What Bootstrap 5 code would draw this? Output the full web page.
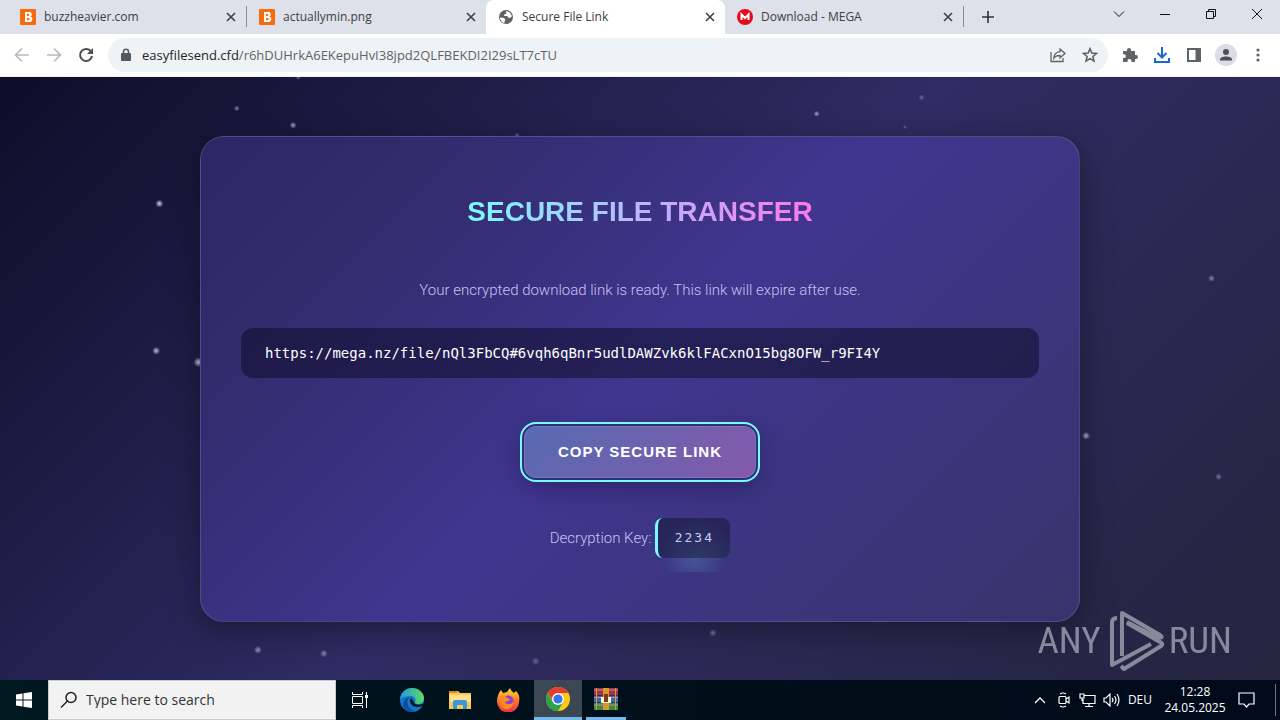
<!DOCTYPE html>
<html lang="en">
<head>
<meta charset="utf-8">
<meta name="viewport" content="width=device-width, initial-scale=1">
<title>Secure File Link</title>
<link href="https://cdn.jsdelivr.net/npm/bootstrap@5.3.0/dist/css/bootstrap.min.css" rel="stylesheet">
<style>
  body { font-family: "Open Sans", "Noto Sans", sans-serif; font-size: 12px; line-height: 16px; color: #3c4043; }
  svg { display: block; flex: none; }
  button { color: inherit; }
  .plain { border: 0; background: none; padding: 0; display: flex; align-items: center; justify-content: center; flex: none; }

  /* browser window */
  .tabstrip { height: 34px; background: #dee1e9; padding-left: 8px; }
  .tab { width: 239px; height: 34px; padding: 0 9px 0 12px; position: relative; }
  .tab.ruled { border-right: 1px solid #8a8d93; border-image: linear-gradient(transparent 20%, #8a8d93 20% 78%, transparent 78%) 1; }
  .tab.current { background: #fff; border-radius: 8px 8px 0 0; }
  .tab a { color: inherit; text-decoration: none; }
  .winbtn { width: 46px; height: 28px; color: #111; }
  .toolbar { height: 43px; background: #fff; padding: 0 6px; border-bottom: 1px solid #f3f1ea; color: #5f6368; }
  .tool { width: 32px; height: 32px; }
  .omnibox { height: 34px; border-radius: 17px; background: #f0f3f6; margin: 0 6px; padding: 0 2px 0 12px; font-size: 13px; }
  .omnibox input { border: 0; background: none; padding: 0; color: #5f6368; outline: 0; min-width: 0; }
  .lock { margin-right: 10px; }

  /* page */
  .sky { background: linear-gradient(135deg, #0f0c29, #302b63 50%, #24243e); font-family: "Liberation Sans", Arial, sans-serif; font-size: 16px; line-height: 24px; min-height: 0; }
  .stars { position: absolute; inset: 0; width: 100%; height: 100%; }
  .panel { width: 100%; max-width: 880px; padding: 57px 40px 63px; border: 1px solid rgba(255,255,255,.12); border-radius: 24px;
    background: linear-gradient(135deg, #2d2766 0%, #322b6c 18%, #40368f 50%, #3c3580 70%, #38346c 100%); box-shadow: 0 8px 32px rgba(0,0,0,.36); color: #c9c0f2; }
  .panel p, .panel .caption-text { font-family: Roboto, "Liberation Sans", sans-serif; font-weight: 300; font-size: 15px; }
  .panel p { margin: 48px 0 26px; }
  .headline { font-size: 28px; line-height: 36px; font-weight: 700; background: linear-gradient(90deg, #7afcff, #b8b8ff 50%, #ff77e9); -webkit-background-clip: text; background-clip: text; color: transparent; }
  .linkbox { height: 50px; border-radius: 12px; background: rgba(15,12,41,.55); color: #fff; padding: 0 24px; font: 14px/24px "DejaVu Sans Mono", monospace; }
  .copy { height: 52px; width: 232px; border: 1px solid rgba(255,255,255,.1); border-radius: 12px; color: #fff; font-size: 15px; font-weight: 700; letter-spacing: 1px;
    background: linear-gradient(135deg, #566bb2 0%, #6d62ae 50%, #8559ac 100%); outline: 2px solid #7afcff; outline-offset: 2px; box-shadow: 0 0 0 2px #2d3278, 0 8px 24px rgba(20,15,70,.5); }
  .key { height: 40px; width: 75px; border-left: 3px solid #7afcff; border-radius: 8px; background: radial-gradient(circle at 55% 110%, #2d3a66, #27245a 75%); color: #c5cdf5; font: 13px/40px "DejaVu Sans Mono", monospace; letter-spacing: 2px; position: relative; }
  .key::after { content: ""; position: absolute; top: 100%; left: 4px; right: 4px; height: 14px; background: radial-gradient(ellipse 32px 30px at 50% 0, rgba(76,120,175,.5), transparent); }
  .watermark { position: absolute; right: 48px; bottom: 8px; color: #a3a2b2; font: 37px/60px "Roboto Condensed", "Liberation Sans Narrow", sans-serif; opacity: .8; }

  /* taskbar */
  .taskbar { height: 40px; background: linear-gradient(90deg, #001820, #000c18 70%, #020a1c); color: #fff; }
  .task { width: 48px; height: 40px; }
  .task.running { border-bottom: 3px solid #76b9ed; }
  .task.front { background: #3b4752; margin-left: 2px; }
  .task.behind { width: 40px; }
  .search { width: 288px; height: 40px; background: #f2f2f2; border: 1px solid #c9c9d2; padding-left: 11px; color: #222; }
  .search input { border: 0; background: none; outline: 0; padding: 0; font-size: 14px; min-width: 0; }
  .search input::placeholder { color: #333; opacity: 1; }
  .tray { width: 24px; height: 40px; }
  .clock { width: 70px; }
  .tray-end { margin-left: 19px; }
</style>
</head>
<body>
<div class="vh-100 d-flex flex-column overflow-hidden">

  <header>
    <div class="tabstrip d-flex align-items-center">
      <div class="tab ruled d-flex align-items-center gap-2">
        <svg width="16" height="16"><rect width="16" height="16" rx="1" fill="#f96a0c"/><path d="M5 3h3.600a2.300 2.300 0 0 1 1.500 4.500A2.700 2.700 0 0 1 9 13H5zM7 5v2h1.300a1 1 0 0 0 0-2zM7 9v2.200h1.600a1.100 1.100 0 0 0 0-2.200z" fill="#fff" fill-rule="evenodd"/></svg>
        <a href="#" class="flex-grow-1">buzzheavier.com</a>
        <button class="plain" aria-label="Close tab"><svg width="12" height="12" stroke="currentColor" stroke-width="1.600"><path d="M2 2l8 8M10 2l-8 8"/></svg></button>
      </div>
      <div class="tab d-flex align-items-center gap-2">
        <svg width="16" height="16"><rect width="16" height="16" rx="1" fill="#f96a0c"/><path d="M5 3h3.600a2.300 2.300 0 0 1 1.500 4.500A2.700 2.700 0 0 1 9 13H5zM7 5v2h1.300a1 1 0 0 0 0-2zM7 9v2.200h1.600a1.100 1.100 0 0 0 0-2.200z" fill="#fff" fill-rule="evenodd"/></svg>
        <a href="#" class="flex-grow-1">actuallymin.png</a>
        <button class="plain" aria-label="Close tab"><svg width="12" height="12" stroke="currentColor" stroke-width="1.600"><path d="M2 2l8 8M10 2l-8 8"/></svg></button>
      </div>
      <div class="tab current d-flex align-items-center gap-2">
        <svg width="16" height="16"><circle cx="8" cy="8" r="7" fill="#5f6368"/><path d="M2 8.500l4 .5 1.500 2-1 1v2.200C4 13.700 2 11.500 2 8.500zM8 2.200c3 0 5.500 2.300 5.800 5.300L12 9l-2-.5L9.500 7H6.300V5.300l2-.6z" fill="#fff"/></svg>
        <a href="#" class="flex-grow-1">Secure File Link</a>
        <button class="plain" aria-label="Close tab"><svg width="12" height="12" stroke="currentColor" stroke-width="1.600"><path d="M2 2l8 8M10 2l-8 8"/></svg></button>
      </div>
      <div class="tab ruled d-flex align-items-center gap-2">
        <svg width="16" height="16"><circle cx="8" cy="8" r="8" fill="#e5091c"/><path d="M4.500 11V5.500L8 9l3.500-3.500V11" fill="none" stroke="#fff" stroke-width="2"/></svg>
        <a href="#" class="flex-grow-1">Download - MEGA</a>
        <button class="plain" aria-label="Close tab"><svg width="12" height="12" stroke="currentColor" stroke-width="1.600"><path d="M2 2l8 8M10 2l-8 8"/></svg></button>
      </div>
      <button class="plain tool ms-2" aria-label="New tab"><svg width="14" height="14" stroke="#333" stroke-width="1.600"><path d="M7 1v12M1 7h12"/></svg></button>
      <div class="d-flex ms-auto align-self-start">
        <button class="plain winbtn" aria-label="Search tabs"><svg width="12" height="12" fill="none" stroke="currentColor"><path d="M1 3.500l5 5 5-5"/></svg></button>
        <button class="plain winbtn" aria-label="Minimize"><svg width="10" height="10" fill="none" stroke="currentColor"><path d="M0 5.500h10"/></svg></button>
        <button class="plain winbtn" aria-label="Restore"><svg width="10" height="10" fill="none" stroke="currentColor"><path d="M.5 2.500h7v7h-7zM2.500 2.500v-2h7v7h-2"/></svg></button>
        <button class="plain winbtn" aria-label="Close"><svg width="12" height="12" fill="none" stroke="currentColor"><path d="M1 1l10 10M11 1L1 11"/></svg></button>
      </div>
    </div>

    <nav class="toolbar d-flex align-items-center" aria-label="Browser toolbar">
      <button class="plain tool" aria-label="Back"><svg width="16" height="16" fill="none" stroke="#b7b9bc" stroke-width="1.600"><path d="M15 8H2M8 1.500L1.500 8 8 14.500"/></svg></button>
      <button class="plain tool" aria-label="Forward"><svg width="16" height="16" fill="none" stroke="#b7b9bc" stroke-width="1.600"><path d="M1 8h13M8 1.500L14.500 8 8 14.500"/></svg></button>
      <button class="plain tool" aria-label="Reload"><svg width="16" height="16" fill="none" stroke="#4a4d51" stroke-width="2"><path d="M13 4.500A6 6 0 1 0 14 9"/><path d="M15 1v6H9z" fill="#4a4d51" stroke="none"/></svg></button>
      <div class="omnibox d-flex align-items-center flex-grow-1">
        <svg class="lock" width="12" height="14"><rect x="1" y="5" width="10" height="8" rx="1" fill="#55595e"/><path d="M3.500 6V3.800a2.500 2.500 0 0 1 5 0V6" fill="none" stroke="#55595e" stroke-width="1.500"/></svg>
        <label for="address" class="text-dark">easyfilesend.cfd</label><input id="address" class="flex-grow-1" value="/r6hDUHrkA6EKepuHvI38jpd2QLFBEKDI2I29sLT7cTU">
        <button class="plain tool" aria-label="Share"><svg width="16" height="16" fill="none" stroke="currentColor" stroke-width="1.300"><path d="M1 5v9.500h12V11"/><path d="M10 2l5 4.500-5 4.300V8.500c-3 0-5 .8-6.200 2.700C4 7.500 6.500 5 10 4.600z"/></svg></button>
        <button class="plain tool" aria-label="Bookmark"><svg width="16" height="16" fill="none" stroke="currentColor" stroke-width="1.600"><path d="M8 1.800l1.800 4.300 4.600.4-3.500 3 1.100 4.600-4-2.500-4 2.500 1.100-4.600-3.500-3 4.600-.4z"/></svg></button>
      </div>
      <button class="plain tool" aria-label="Extensions"><svg width="16" height="16"><path d="M1 4h4V3a2 2 0 0 1 4 0v1h4v4h1a2 2 0 0 1 0 4h-1v3H9.500v-1a2 2 0 0 0-4 0v1H1v-4h1a1.800 1.800 0 0 0 0-3.700H1z" fill="currentColor"/></svg></button>
      <button class="plain tool" aria-label="Downloads"><svg width="18" height="18" fill="none" stroke="#1a66d2" stroke-width="2"><path d="M9 1v10M4.500 7L9 11.500 13.500 7M2 12v4h14v-4"/></svg></button>
      <button class="plain tool" aria-label="Side panel"><svg width="14" height="14"><path d="M1 1h12v12H1z" fill="none" stroke="currentColor" stroke-width="2"/><path d="M8.500 1H14v12H8.500z" fill="currentColor"/></svg></button>
      <button class="plain tool" aria-label="Profile"><svg width="22" height="22"><circle cx="11" cy="11" r="11" fill="#dadde6"/><circle cx="11" cy="8" r="3" fill="#4a4f5c"/><path d="M5 16.500v-1c0-2 3-3 6-3s6 1 6 3v1z" fill="#4a4f5c"/></svg></button>
      <button class="plain tool" aria-label="Menu"><svg width="4" height="16" fill="currentColor"><circle cx="2" cy="3" r="1.600"/><circle cx="2" cy="8" r="1.600"/><circle cx="2" cy="13" r="1.600"/></svg></button>
    </nav>
  </header>

  <main class="sky flex-grow-1 position-relative d-flex align-items-center justify-content-center">
    <svg class="stars" aria-hidden="true">
      <defs><radialGradient id="glow"><stop offset="0" stop-color="#cfcbe8"/><stop offset=".4" stop-color="#a5a1cc" stop-opacity=".8"/><stop offset="1" stop-color="#a5a1cc" stop-opacity="0"/></radialGradient></defs>
      <g fill="url(#glow)">
        <circle cx="18.500%" cy="5.200%" r="3" opacity=".6"/><circle cx="22.900%" cy="8%" r="3.500" opacity=".8"/><circle cx="12.450%" cy="21%" r="4"/><circle cx="12.200%" cy="45.400%" r="4" opacity=".9"/>
        <circle cx="15.500%" cy="47.300%" r="5"/><circle cx="20.150%" cy="95%" r="4" opacity=".7"/><circle cx="25.300%" cy="95.600%" r="4" opacity=".6"/><circle cx="41.850%" cy="96.900%" r="4" opacity=".4"/>
        <circle cx="55.700%" cy="92.200%" r="4" opacity=".5"/><circle cx="63.800%" cy="6.100%" r="3" opacity=".8"/><circle cx="72%" cy="3.400%" r="3" opacity=".4"/><circle cx="70.700%" cy="8.300%" r="2" opacity=".4"/>
        <circle cx="84.850%" cy="59.500%" r="4" opacity=".9"/><circle cx="94.650%" cy="33.400%" r="3.500" opacity=".6"/><circle cx="95.200%" cy="66.300%" r="3.500" opacity=".5"/><circle cx="23.300%" cy="0" r="3" opacity=".5"/><circle cx="40.400%" cy="9.700%" r="3" opacity=".4"/>
      </g>
    </svg>

    <section class="panel position-relative text-center d-flex flex-column align-items-center">
      <h1 class="headline m-0">SECURE FILE TRANSFER</h1>
      <p>Your encrypted download link is ready. This link will expire after use.</p>
      <div class="linkbox w-100 d-flex align-items-center">https://mega.nz/file/nQl3FbCQ#6vqh6qBnr5udlDAWZvk6klFACxnO15bg8OFW_r9FI4Y</div>
      <button class="copy mt-5">COPY SECURE LINK</button>
      <div class="d-flex align-items-center gap-1 mt-4 pt-3"><span class="caption-text">Decryption Key:</span><span class="key">2234</span></div>
    </section>

    <div class="watermark d-flex align-items-center gap-1">
      <span class="me-1">ANY</span>
      <svg width="56" height="62" fill="none" stroke="currentColor" stroke-width="4" stroke-linejoin="round"><path d="M8 8Q3 8 3 13V55L42 34"/><path d="M13 46V3L51 25Q55 28 49 28L18 12"/><path d="M12 56L15 59 52 36Q55 34 51 32L18 13M13 47"/></svg>
      <span>RUN</span>
    </div>
  </main>

  <footer class="taskbar d-flex align-items-center">
    <button class="plain task" aria-label="Start"><svg width="16" height="16" fill="#fff"><path d="M0 2.500l6.500-1v6H0zM7.500 1.300L16 0v7.500H7.500zM0 8.500h6.500v6l-6.500-1zM7.500 8.500H16V16l-8.500-1.300z"/></svg></button>
    <div class="search d-flex align-items-center gap-2">
      <svg width="18" height="18" fill="none" stroke="#222" stroke-width="1.500"><circle cx="11" cy="6.500" r="5"/><path d="M7.500 10L1 16.500"/></svg>
      <input class="flex-grow-1" placeholder="Type here to search" aria-label="Search">
    </div>
    <button class="plain task" aria-label="Task view"><svg width="18" height="18" fill="none" stroke="#fff"><path d="M1.500 5.500h10v7h-10zM1.500 1v2.500h10V1M1.500 17v-2.500h10V17M15.500 1v16"/><path d="M14 4h3v3h-3z" fill="#fff" stroke="none"/></svg></button>
    <button class="plain task ms-1" aria-label="Edge"><svg width="24" height="24"><defs><linearGradient id="eg"><stop stop-color="#1b9de2"/><stop offset="1" stop-color="#62d85c"/></linearGradient></defs><circle cx="12" cy="12" r="12" fill="#1477cf"/><path d="M0 11C1 4 6 0 12 0c7 0 12 5 12 10 0 4-3 6-6 6-2 0-4-1-3-2 2-3-1-6-4-6C6 8 2 9 0 11z" fill="url(#eg)"/><path d="M8 12c-2 5 2 10 7 11-5 2-11-1-12-6 0-4 2-7 6-8z" fill="#0d4f9c"/><path d="M11 10c-3 4 1 9 6 9 3 0 5-1 6-1l1-3c-2 2-9 3-10-1z" fill="#001820"/></svg></button>
    <button class="plain task" aria-label="File Explorer"><svg width="22" height="20"><path d="M0 1h9l2 2h11v16H0z" fill="#f8ca52"/><path d="M0 1h8l1 2H0z" fill="#d98f16"/><path d="M1 5h21v7H1z" fill="#fde08a"/><path d="M4 19v-7q0-2 2-2h10q2 0 2 2v7h-4v-4H8v4z" fill="#3a97d8"/></svg></button>
    <button class="plain task" aria-label="Firefox"><svg width="24" height="24"><defs><linearGradient id="fx" x2="0" y2="1"><stop stop-color="#ffdf35"/><stop offset=".5" stop-color="#ff7b25"/><stop offset="1" stop-color="#f0264f"/></linearGradient></defs><path d="M3 5l2-3 2 3 4-1 3-4c1 3 3 4 4 5l2-2c3 3 4 6 3 11a11 11 0 0 1-22-1c0-3 1-6 2-8z" fill="url(#fx)"/><circle cx="12" cy="13" r="5.500" fill="#8a3fd6"/><path d="M5 8c3-1 5 0 6 2l3 1c-1 3-4 2-5 3 1 3 6 3 8 0 1 5-4 8-8 7-5-1-6-7-4-13z" fill="#ff8a22"/></svg></button>
    <button class="plain task running front" aria-label="Chrome"><svg width="24" height="24" viewBox="-12 -12 24 24"><circle r="12" fill="#fbc916"/><path d="M-10.400-6A12 12 0 0 1 10.400-6H0L-5 2z" fill="#e33b2e"/><path d="M-10.400-6A12 12 0 0 0 0 12L5.200 3H-5.200z" fill="#2ba24c"/><circle r="6" fill="#fff"/><circle r="4.600" fill="#3578e5"/></svg></button>
    <button class="plain task running behind ms-1" aria-label="WinRAR"><svg width="24" height="22"><path d="M0 0h24v7H0z" fill="#a83242"/><path d="M0 7.500h24v7H0z" fill="#4562b5"/><path d="M0 15h24v7H0z" fill="#398a45"/><path d="M0 2h24M0 9.500h24M0 17h24" stroke="#c98a90" stroke-width="1"/><path d="M2 0h1v22H2zM21 0h1v22h-1z" fill="#caa03c"/><path d="M9 0h6v22H9z" fill="#d99a2d"/><path d="M7 9h10v6H7z" fill="#fff0cc"/><path d="M10 6h4v8h-4z" fill="#7d3b1c"/></svg></button>

    <div class="d-flex align-items-center ms-auto">
      <button class="plain tray" aria-label="Hidden icons"><svg width="12" height="8" fill="none" stroke="#fff" stroke-width="1.300"><path d="M1 7l5-5 5 5"/></svg></button>
      <button class="plain tray" aria-label="Meet now"><svg width="14" height="16" fill="none" stroke="#fff" stroke-width="1.200"><rect x="2" y="4.500" width="7" height="7" rx="1"/><path d="M9 7l3-2v6L9 9M3 2q3-2 6 0M3 14q3 2 6 0"/></svg></button>
      <button class="plain tray" aria-label="Network"><svg width="17" height="15" fill="none" stroke="#fff" stroke-width="1.200"><path d="M5 2.500h11v8H4V6M10 10.500v3M6 13.500h8M1 1h4v4H1zM3 5v3"/></svg></button>
      <button class="plain tray" aria-label="Volume"><svg width="17" height="14" fill="none" stroke="#fff" stroke-width="1.200"><path d="M1 5h2l4-4v12L3 9H1zM9 5q2 2 0 4M11.500 3q3 4 0 8M14 1q4 6 0 12"/></svg></button>
      <button class="plain ps-1 pe-2">DEU</button>
      <div class="clock text-center">12:28<br>24.05.2025</div>
      <button class="plain ms-2" aria-label="Notifications"><svg width="18" height="17" fill="none" stroke="#fff" stroke-width="1.200"><path d="M1 1h15v11h-5l-2.500 3L6 12H1z"/></svg></button>
      <div class="tray-end me-1 border-start border-secondary py-3"></div>
    </div>
  </footer>
</div>
<script src="https://cdn.jsdelivr.net/npm/bootstrap@5.3.0/dist/js/bootstrap.bundle.min.js"></script>
</body>
</html>
